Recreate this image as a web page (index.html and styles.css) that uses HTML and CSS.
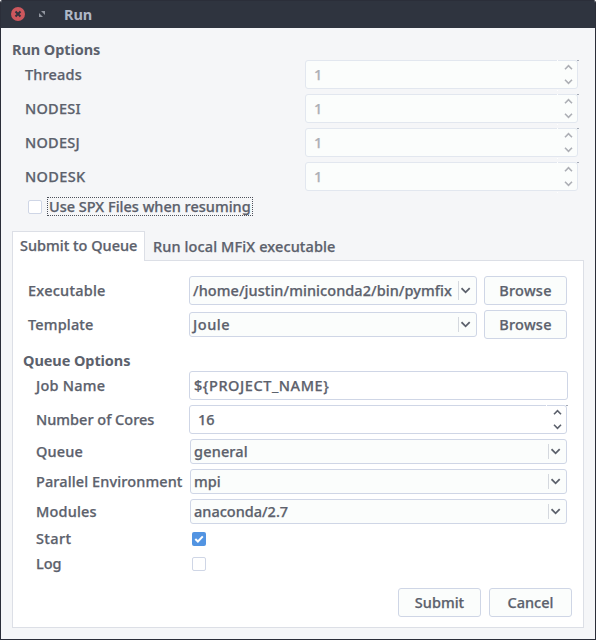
FILE: index.html
```html
<!DOCTYPE html>
<html lang="en">
<head>
<meta charset="utf-8">
<title>Run</title>
<link rel="stylesheet" href="styles.css">
</head>
<body>
<svg class="defs" aria-hidden="true">
  <symbol id="arrows" viewBox="0 0 9 21"><path d="M1 5.2 4.5 1.7 8 5.2M1 15.8 4.5 19.3 8 15.8"/></symbol>
  <symbol id="chevron" viewBox="0 0 10 7"><path d="M.5 1.2 4.6 5.3 8.7 1.2"/></symbol>
</svg>
<div class="window">
  <header class="titlebar">
    <svg class="close" viewBox="0 0 14 14"><circle cx="7" cy="7" r="7"/><path d="M4.5 4.5 9.5 9.5M9.5 4.5 4.5 9.5"/></svg>
    <svg class="maximize" viewBox="0 0 6 6"><path d="M2 0H6V4ZM0 2 4 6H0Z"/></svg>
    <h1 class="title">Run</h1>
  </header>

  <section class="run-options">
    <h2 class="heading">Run Options</h2>
    <div class="option"><label class="ls1">Threads</label><div class="spin disabled"><span>1</span><svg class="arrows"><use href="#arrows"/></svg></div></div>
    <div class="option"><label class="ls2">NODESI</label><div class="spin disabled"><span>1</span><svg class="arrows"><use href="#arrows"/></svg></div></div>
    <div class="option"><label class="ls2">NODESJ</label><div class="spin disabled"><span>1</span><svg class="arrows"><use href="#arrows"/></svg></div></div>
    <div class="option"><label class="ls3">NODESK</label><div class="spin disabled"><span>1</span><svg class="arrows"><use href="#arrows"/></svg></div></div>
    <div class="resume"><span class="check"></span><span class="focus">Use SPX Files when resuming</span></div>
  </section>

  <nav class="tabs">
    <div class="tab active">Submit to Queue</div>
    <div class="tab local">Run local MFiX executable</div>
  </nav>

  <main class="pane">
    <div class="row source">
      <label class="ls2">Executable</label>
      <div class="combo tall"><span class="path">/home/justin/miniconda2/bin/pymfix</span><i></i><svg class="chevron"><use href="#chevron"/></svg></div>
      <button class="button ls2">Browse</button>
    </div>
    <div class="row source">
      <label class="ls1">Template</label>
      <div class="combo"><span class="ls5">Joule</span><i></i><svg class="chevron"><use href="#chevron"/></svg></div>
      <button class="button ls2">Browse</button>
    </div>

    <h2 class="heading queue-heading">Queue Options</h2>
    <div class="row field"><label class="ls2">Job Name</label><div class="input ls5">${PROJECT_NAME}</div></div>
    <div class="row field"><label>Number of Cores</label><div class="spin"><span>16</span><svg class="arrows"><use href="#arrows"/></svg></div></div>
    <div class="row choice"><label class="ls1">Queue</label><div class="combo"><span class="ls1">general</span><i></i><svg class="chevron"><use href="#chevron"/></svg></div></div>
    <div class="row choice"><label class="environment">Parallel Environment</label><div class="combo"><span>mpi</span><i></i><svg class="chevron"><use href="#chevron"/></svg></div></div>
    <div class="row choice"><label class="ls1">Modules</label><div class="combo"><span>anaconda/2.7</span><i></i><svg class="chevron"><use href="#chevron"/></svg></div></div>
    <div class="row toggle start"><label class="ls3">Start</label><span class="check checked"><svg viewBox="0 0 14 14"><path d="M3.3 7 5.9 9.5 10.8 4.4"/></svg></span></div>
    <div class="row toggle"><label>Log</label><span class="check"></span></div>

    <footer class="actions">
      <button class="button">Submit</button>
      <button class="button">Cancel</button>
    </footer>
  </main>
</div>
</body>
</html>
```
FILE: styles.css
```css
* { box-sizing: border-box; }

body {
  margin: 0;
  background: #fff;
  color: #5c616c;
  font: 500 14.5px/19px "Noto Sans", sans-serif;
  -webkit-text-stroke: .25px currentColor;
  white-space: nowrap;
}

h1, h2 { margin: 0; font-size: inherit; font-weight: 700; letter-spacing: -.08px; -webkit-text-stroke: 0; }
svg { display: block; flex: none; }
.defs { position: absolute; width: 0; height: 0; }

.ls1 { letter-spacing: .16px; }
.ls2 { letter-spacing: .24px; }
.ls3 { letter-spacing: .36px; }
.ls5 { letter-spacing: .56px; }
.path { letter-spacing: .06px; }
.local, .environment { letter-spacing: .11px; }

.window {
  width: 596px;
  height: 640px;
  border: 1px solid #2b2e39;
  border-top: 0;
  border-radius: 3px 3px 0 0;
  background: #f5f6f8;
  overflow: hidden;
}

.titlebar {
  display: flex;
  align-items: center;
  height: 28px;
  padding-left: 10px;
  border-top: 1px solid #2b2e39;
  background: #2f343f;
}
.close { width: 14px; height: 14px; margin-top: -1px; fill: #cc575d; stroke: none; }
.close path { stroke: #2f343f; stroke-width: 2; }
.maximize { width: 6px; height: 6px; margin: -1px 0 0 14px; fill: #90959f; }
.title { margin-left: 19px; color: #afb8c6; }

.run-options { padding: 12px 17px 0 24px; }
.heading { height: 20px; line-height: 19px; }
.run-options .heading { margin-left: -13px; }

.option {
  display: flex;
  align-items: center;
  justify-content: space-between;
  height: 29px;
  margin-bottom: 5px;
}

.spin, .input, .combo, .button {
  display: flex;
  align-items: center;
  height: 29px;
  border: 1px solid #cfd6e6;
  border-radius: 3px;
}
.spin {
  position: relative;
  justify-content: space-between;
  width: 273px;
  padding: 0 4px 0 8px;
  background: #fff;
}
.spin::before {
  content: "";
  position: absolute;
  top: -1px;
  right: 19px;
  width: 1px;
  height: 29px;
  border: solid #fff;
  border-width: 1px 0;
}
.spin::after {
  content: "";
  position: absolute;
  top: -1px;
  right: -2px;
  width: 2px;
  height: 1px;
  background: #a4aab6;
}
.arrows { width: 9px; height: 21px; fill: none; stroke: #5c616c; stroke-width: 1.6; }
.disabled { border-color: #e2e7ef; background: #fbfdfc; color: #adafb5; }
.disabled .arrows { stroke: #adafb5; }

.resume { display: flex; align-items: center; gap: 5px; height: 20px; margin: 1px 0 0 3px; }
.resume .check { margin-top: 2px; }
.check {
  width: 14px;
  height: 14px;
  border: 1px solid #cfd6e6;
  border-radius: 2px;
  background: #fff;
}
.checked { border: 0; background: #5294e2; }
.checked svg { fill: none; stroke: #fff; stroke-width: 2; }
.focus { width: 206px; height: 19px; padding: 0 1px; border: 1px dotted #4d515b; line-height: 17px; }

.tabs { display: flex; height: 44px; padding: 15px 0 0 11px; }
.tab { height: 29px; padding: 6px 8px 0; line-height: 19px; }
.active {
  position: relative;
  width: 133px;
  height: 30px;
  padding: 4px 7px 0;
  border: 1px solid #dcdfe6;
  border-bottom: 0;
  background: #fff;
}

.pane {
  width: 572px;
  height: 368px;
  margin-left: 11px;
  padding: 15px 0 0 11px;
  border: 1px solid #dcdfe6;
  background: #fff;
}

.row { display: grid; align-items: center; }
.source { grid-template-columns: 161px 288px 83px; height: 29px; margin: 0 0 5px 4px; }
.source .button { margin-left: 7px; }
.queue-heading { margin: 12px 0 0 -1px; }
.field { grid-template-columns: 153px auto; height: 29px; margin: 5px 0 0 12px; }
.queue-heading + .field { margin-top: 0; }
.choice { grid-template-columns: 154px 377px; height: 25px; margin: 5px 0 0 12px; }
.toggle { grid-template-columns: 156px 14px; height: 20px; margin: 5px 0 0 12px; }
.toggle .check { margin-top: 2px; }

.input { width: 379px; padding-left: 4px; }
.field .spin { width: 378px; }
.combo {
  height: 25px;
  padding: 0 5px 0 3px;
  background: #fbfdfc;
}
.tall { height: 29px; }
.combo i { width: 1px; height: 15px; margin: 0 2px 0 auto; background: #d5d9df; }
.tall i { height: 19px; }
.chevron { width: 10px; height: 7px; fill: none; stroke: #5c616c; stroke-width: 1.8; }
.start { margin-top: 4px; }

.button {
  justify-content: center;
  width: 83px;
  padding: 0 0 1px;
  background: #fbfdfc;
  color: inherit;
  font-family: inherit;
  font-size: inherit;
  font-weight: inherit;
}
.actions { display: flex; justify-content: flex-end; gap: 8px; margin: 15px 11px 0 0; }
```
